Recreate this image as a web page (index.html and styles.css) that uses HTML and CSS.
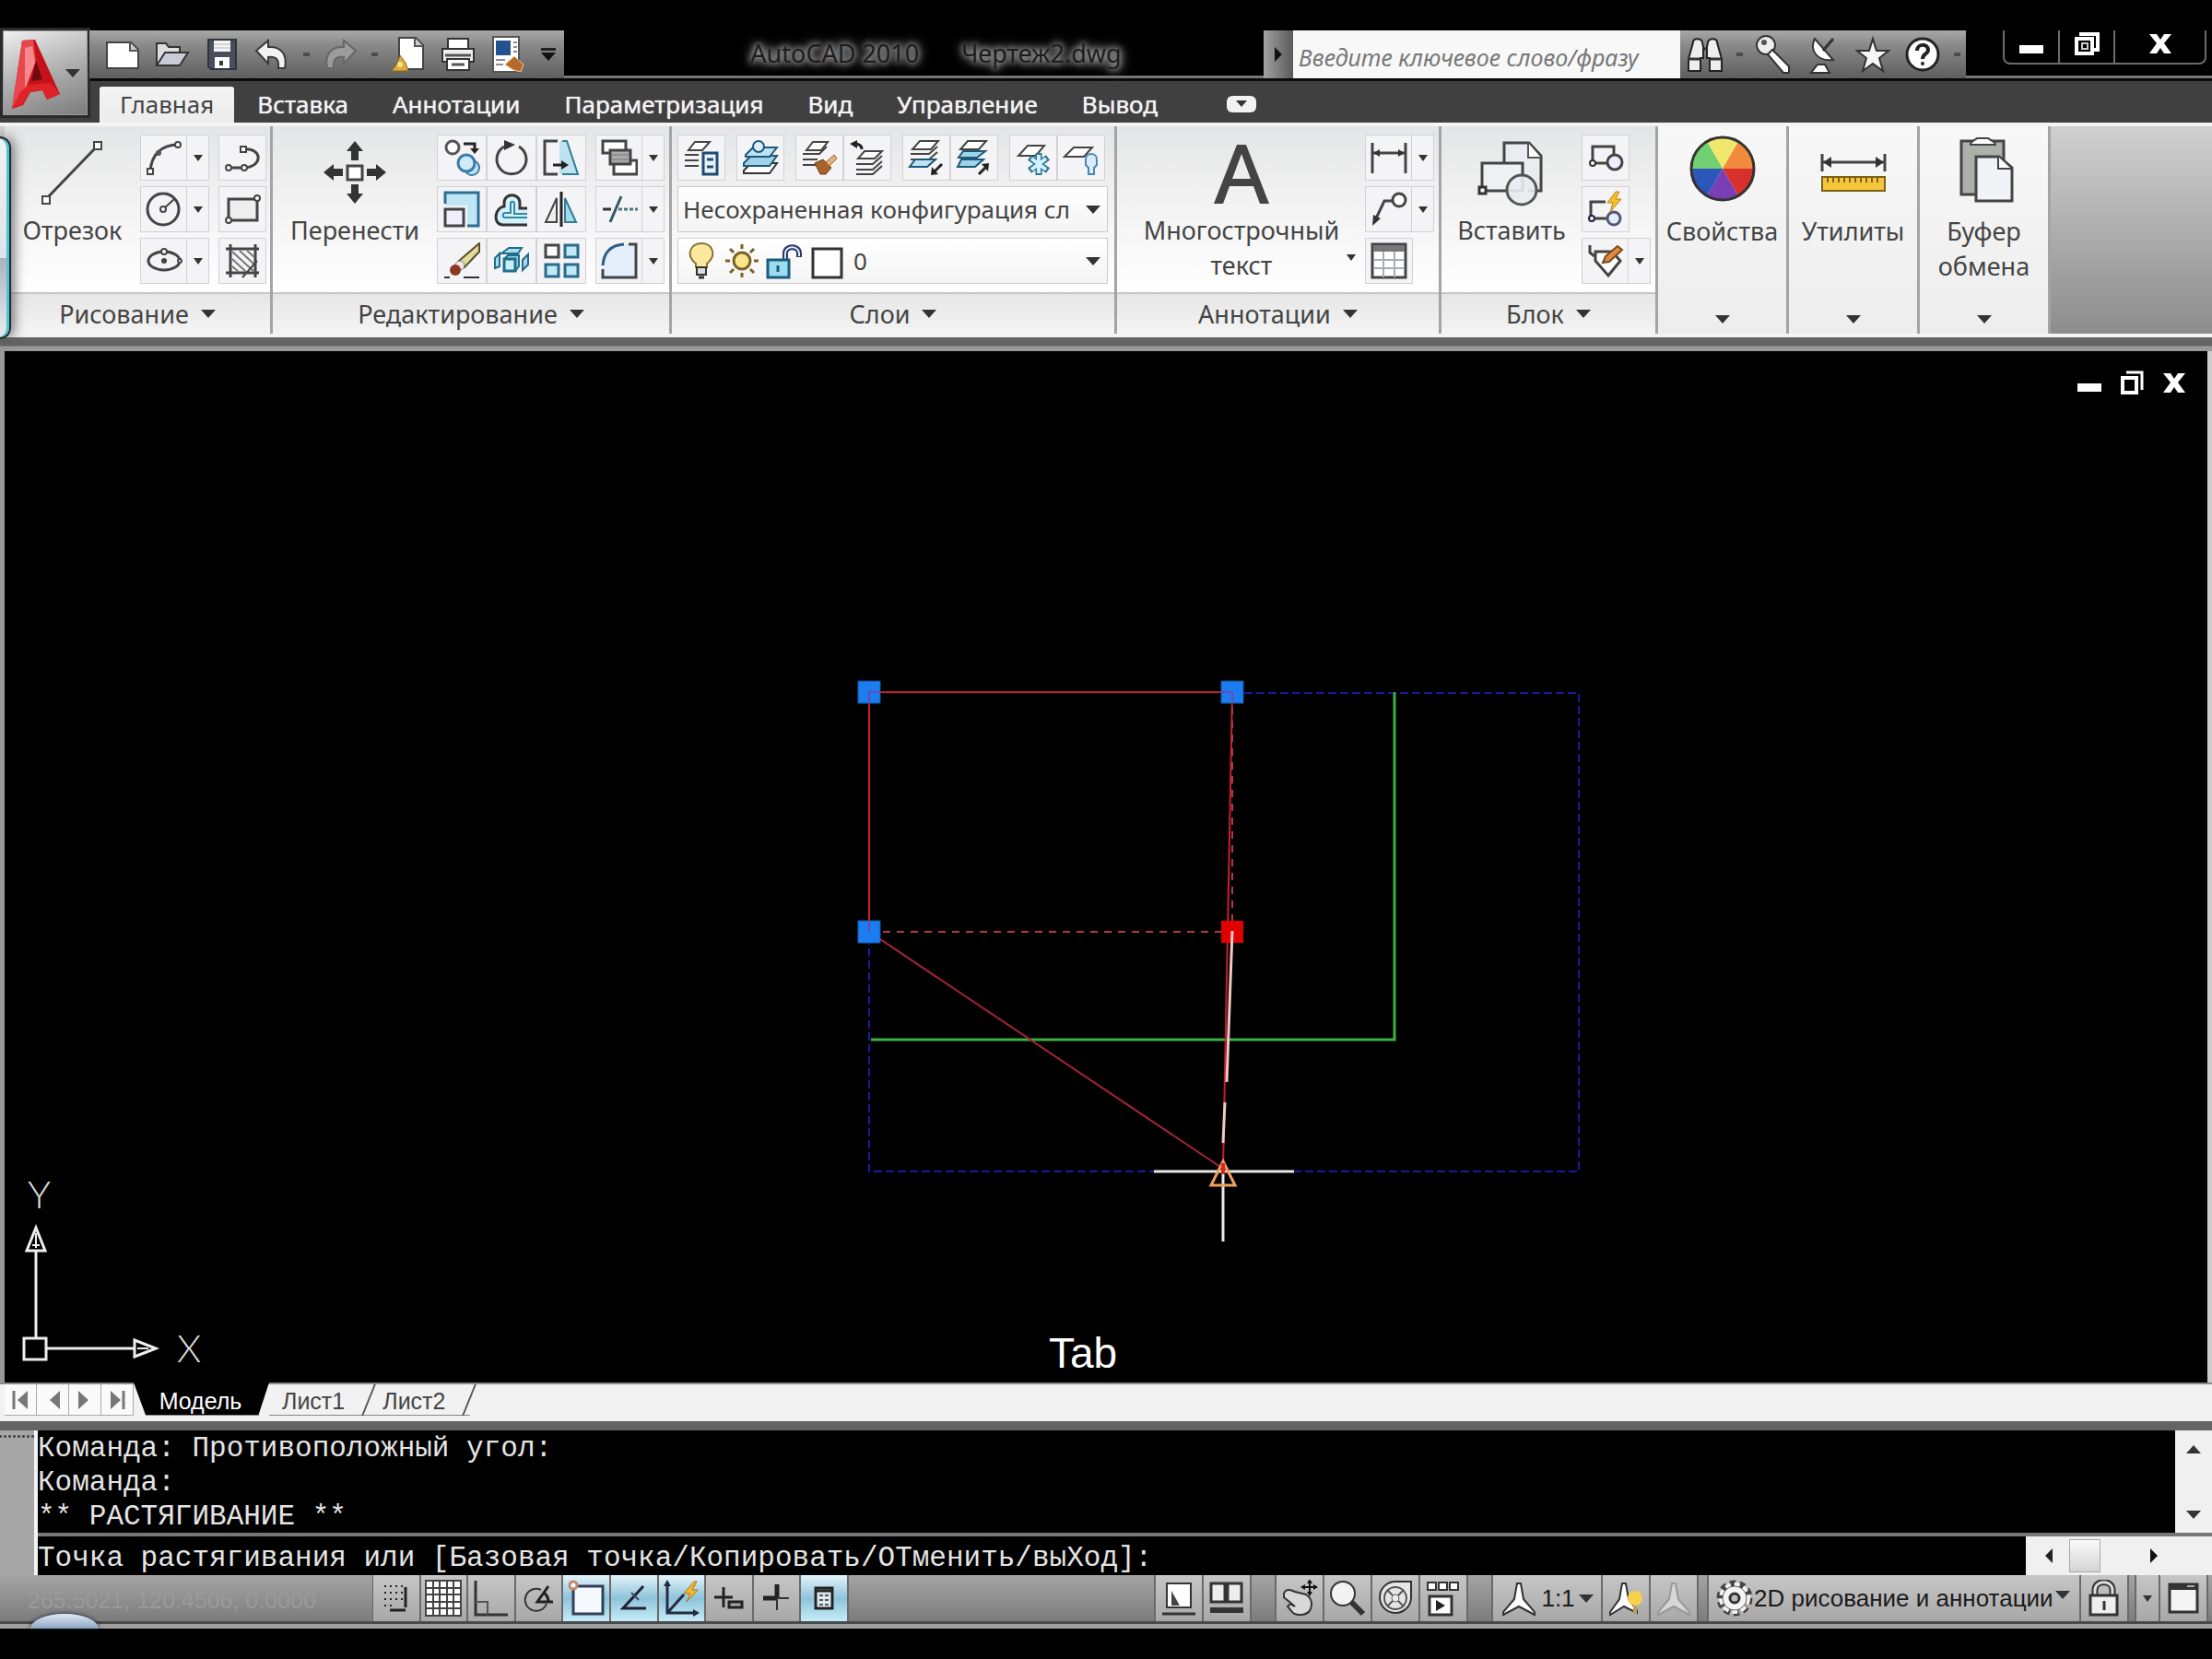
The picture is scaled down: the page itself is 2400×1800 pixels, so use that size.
FILE: index.html
```html
<!DOCTYPE html>
<html lang="ru">

<head>
    <meta charset="UTF-8">
    <meta name="viewport" content="width=device-width, initial-scale=1.0">
    <title>AutoCAD 2010 - Чертеж2.dwg</title>
    <link rel="stylesheet" href="styles.css">
</head>

<body>
    <!-- Заголовок и вкладки -->
    <header class="top">
        <button class="app-btn" aria-label="Меню приложения">
            <svg width="56" height="78" viewBox="0 0 56 78">
                <path d="M13 4 L27 3 L54 62 L40 68 L35 58 L22 60 L14 74 L2 78 Z" fill="#c4121a" />
                <path d="M13 4 L25 3 L28 26 L14 66 L2 78 Z" fill="#e8474e" />
                <path d="M16 12 L24 10 L27 28 L16 56 Z" fill="#f58a8c" />
                <path d="M28 26 L35 46 L23 48 Z" fill="#6e0a10" />
                <path d="M20 52 L44 50 L54 62 L40 68 L35 58 L22 60 L14 74 L2 78 L11 60 Z" fill="#dd2228" />
            </svg>
            <span class="caret"></span>
        </button>

        <div class="titlebar">
            <div class="qat">
                <button aria-label="Создать"><svg width="40" height="34" viewBox="0 0 40 34"><path d="M3 4h26l8 8v20H3z" fill="#fff" stroke="#444" stroke-width="2" /><path d="M28 4v9h9" fill="#ccc" stroke="#555" stroke-width="2" /></svg></button>
                <button aria-label="Открыть"><svg width="40" height="34" viewBox="0 0 40 34"><path d="M3 29V5h10l3 4h12v6" fill="#ddd" stroke="#333" stroke-width="2" /><path d="M3 29l9-14h25l-9 14z" fill="#c9ccd6" stroke="#333" stroke-width="2" /></svg></button>
                <button aria-label="Сохранить"><svg width="36" height="36" viewBox="0 0 36 36"><path d="M3 2h30v32H6l-3-3z" fill="#4a4e5c" stroke="#30333c" stroke-width="2" /><path d="M9 3h18v12H9z" fill="#f4f4f4" /><path d="M9 7h18M9 11h18" stroke="#bbb" /><path d="M10 21h16v12H10z" fill="#fff" /><path d="M15 25h4v5h-4z" fill="#333" /></svg></button>
                <button aria-label="Отменить"><svg width="40" height="36" viewBox="0 0 40 36"><path d="M3 14L16 3v7c14-1 21 8 18 23h-7c1-9-2-13-11-12v7z" fill="#f2f2f2" stroke="#3a3a3a" stroke-width="2" /></svg></button>
                <span class="dot"></span>
                <button aria-label="Повторить"><svg width="40" height="36" viewBox="0 0 40 36"><path d="M37 14L24 3v7C10 9 3 18 6 33h7c-1-9 2-13 11-12v7z" fill="#9b9b9b" stroke="#666" stroke-width="2" /></svg></button>
                <span class="dot"></span>
                <button aria-label="Лист"><svg width="40" height="42" viewBox="0 0 40 42"><path d="M10 3h18l8 8v26H10z" fill="#fff" stroke="#444" stroke-width="2" /><path d="M27 3v9h9" fill="#ccc" stroke="#555" stroke-width="2" /><path d="M11 22l-3 9-6 8h18l-3-9z" fill="#e0ad3b" stroke="#8a6a22" /><circle cx="11" cy="32" r="3" fill="#f8e37c" /></svg></button>
                <button aria-label="Печать"><svg width="40" height="38" viewBox="0 0 40 38"><path d="M9 2h22v12H9z" fill="#fff" stroke="#333" stroke-width="2" /><path d="M3 13h34v14H3z" fill="#eee" stroke="#333" stroke-width="2" /><path d="M8 24h24v12H8z" fill="#fff" stroke="#333" stroke-width="2" /><path d="M6 20h28M13 30h14" stroke="#555" stroke-width="3" /></svg></button>
                <button aria-label="Свойства листа"><svg width="42" height="42" viewBox="0 0 42 42"><path d="M5 2h28v38H5z" fill="#fff" stroke="#555" stroke-width="2" /><path d="M8 6h16v16H8z" fill="#24518f" /><path d="M27 8h4M27 13h4M27 18h4M8 27h10M8 32h8" stroke="#889" stroke-width="2" /><path d="M18 32l10-9 10 9-3 8-8-2z" fill="#b5692b" stroke="#f1c99b" /></svg></button>
                <button class="more" aria-label="Настройка"><span class="bar"></span><span class="caret"></span></button>
            </div>
            <div class="caption">
                <span>AutoCAD 2010</span>
                <span>Чертеж2.dwg</span>
            </div>
            <div class="info">
                <button class="info-toggle" aria-label="Свернуть"><span class="caret-right"></span></button>
                <input type="text" class="search" placeholder="Введите ключевое слово/фразу" aria-label="Поиск">
                <button aria-label="Найти"><svg width="42" height="44" viewBox="0 0 42 44"><path d="M8 9c0-5 9-5 10 0l1 5v12h-3v14H3V27zM34 9c0-5-9-5-10 0l-1 5v12h3v14h13V27z" fill="#eee" stroke="#222" stroke-width="2" /><path d="M3 27h13M26 27h13M19 16h4" stroke="#333" stroke-width="3" /></svg></button>
                <span class="dot"></span>
                <button aria-label="Подписка"><svg width="40" height="44" viewBox="0 0 40 44"><circle cx="12" cy="12" r="10" fill="#eee" stroke="#333" stroke-width="2" /><circle cx="10" cy="9" r="3" fill="#555" /><path d="M14 22l5-5 18 18v7h-6z" fill="#fff" stroke="#333" stroke-width="2" /></svg></button>
                <button aria-label="Связь"><svg width="36" height="44" viewBox="0 0 36 44"><path d="M9 5c-6 12 2 25 20 23z" fill="#fff" stroke="#333" stroke-width="2" /><path d="M18 18L29 5" stroke="#333" stroke-width="3" /><path d="M12 33h8l5 9H5z" fill="#fff" stroke="#333" stroke-width="2" /></svg></button>
                <button aria-label="Избранное"><svg width="40" height="44" viewBox="0 0 40 44"><path d="M20 5l4 13h13l-10 8 4 14-11-8-11 8 4-14-10-8h13z" fill="#f6f6f6" stroke="#333" stroke-width="2" /></svg></button>
                <button aria-label="Справка"><svg width="42" height="44" viewBox="0 0 42 44"><circle cx="21" cy="22" r="17" fill="#fff" stroke="#222" stroke-width="3" /><path d="M15 18c0-8 12-8 12-1 0 5-6 4-6 10" fill="none" stroke="#222" stroke-width="4" /><circle cx="21" cy="32" r="2" fill="#222" /></svg></button>
                <span class="dot"></span>
            </div>
            <div class="win-btns">
                <button aria-label="Свернуть окно"><svg width="30" height="32" viewBox="0 0 30 32"><path d="M2 14h26v9H2z" fill="#fff" /></svg></button>
                <button aria-label="Восстановить окно"><svg width="30" height="32" viewBox="0 0 30 32"><path d="M9 4V2h18v17h-4M4 7h17v16H4z" fill="none" stroke="#fff" stroke-width="4" /><path d="M10 12h6v6h-6z" fill="none" stroke="#ccc" stroke-width="2" /></svg></button>
                <button class="wide" aria-label="Закрыть окно"><svg width="30" height="32" viewBox="0 0 30 32"><path d="M3 2h8l4 6 4-6h8l-8 10 8 11h-8l-4-6-4 6H3l8-11z" fill="#fff" /></svg></button>
            </div>
        </div>

        <nav class="tabs">
            <a href="#" class="active">Главная</a>
            <a href="#">Вставка</a>
            <a href="#">Аннотации</a>
            <a href="#">Параметризация</a>
            <a href="#">Вид</a>
            <a href="#">Управление</a>
            <a href="#">Вывод</a>
            <button class="pill" aria-label="Свернуть ленту"><span class="caret"></span></button>
        </nav>
    </header>

    <!-- Лента -->
    <div class="ribbon">
        <section class="panel draw">
            <div class="panel-body">
                <button class="big"><svg width="72" height="74" viewBox="0 0 72 74"><path d="M7 64L61 8" stroke="#444" stroke-width="3" /><path d="M59 2h8v8h-8zM3 61h8v8H3z" fill="#fff" stroke="#444" stroke-width="2" /></svg>Отрезок</button>
                <div class="stack">
                    <div class="split"><button aria-label="Дуга"><svg class="ic" viewBox="0 0 40 40"><path d="M5 35C6 18 16 6 35 6" fill="none" stroke="#444" stroke-width="3" /><circle cx="35" cy="6" r="3" fill="#fff" stroke="#444" stroke-width="2" /><circle cx="14" cy="15" r="3" fill="#555" /><path d="M2 32h6v6H2z" fill="#fff" stroke="#444" stroke-width="2" /></svg></button><button class="drop" aria-label="Ещё"><span class="caret sm"></span></button></div>
                    <div class="split"><button aria-label="Круг"><svg class="ic" viewBox="0 0 40 40"><circle cx="19" cy="20" r="17" fill="none" stroke="#444" stroke-width="3" /><path d="M19 20L31 9" stroke="#444" stroke-width="2" /><circle cx="19" cy="20" r="3" fill="#fff" stroke="#444" stroke-width="2" /></svg></button><button class="drop" aria-label="Ещё"><span class="caret sm"></span></button></div>
                    <div class="split"><button aria-label="Эллипс"><svg class="ic" viewBox="0 0 40 40"><ellipse cx="20" cy="20" rx="17" ry="10" fill="none" stroke="#444" stroke-width="3" /><circle cx="20" cy="20" r="3" fill="#444" /><circle cx="20" cy="10" r="3" fill="#fff" stroke="#444" stroke-width="2" /><circle cx="37" cy="20" r="2" fill="#fff" stroke="#444" stroke-width="2" /></svg></button><button class="drop" aria-label="Ещё"><span class="caret sm"></span></button></div>
                </div>
                <div class="stack">
                    <button class="tile" aria-label="Полилиния"><svg class="ic" viewBox="0 0 40 40"><path d="M4 31h17M21 11c22-2 21 20 0 20" fill="none" stroke="#444" stroke-width="3" /><circle cx="5" cy="31" r="3" fill="#fff" stroke="#444" stroke-width="2" /><circle cx="22" cy="31" r="3" fill="#fff" stroke="#444" stroke-width="2" /><path d="M18 8h6v6h-6z" fill="#fff" stroke="#444" stroke-width="2" /></svg></button>
                    <button class="tile" aria-label="Прямоугольник"><svg class="ic" viewBox="0 0 40 40"><path d="M5 9h31v23H5z" fill="#eee" stroke="#444" stroke-width="3" /><circle cx="36" cy="8" r="3" fill="#fff" stroke="#444" stroke-width="2" /><circle cx="5" cy="32" r="3" fill="#fff" stroke="#444" stroke-width="2" /></svg></button>
                    <button class="tile" aria-label="Штриховка"><svg class="ic" viewBox="0 0 40 40"><path d="M2 7h36M2 33h36M7 2v36M34 2v36" stroke="#444" stroke-width="3" /><path d="M9 10l24 22M9 18l15 14M9 26l7 6M17 9l16 15M25 9l8 7" stroke="#777" stroke-width="2" /><path d="M20 38l16-18" stroke="#444" stroke-width="2" /></svg></button>
                </div>
            </div>
            <button class="panel-title">Рисование<span class="caret"></span></button>
        </section>

        <section class="panel edit">
            <div class="panel-body">
                <button class="big"><svg width="72" height="74" viewBox="0 0 72 74"><path d="M28 28h16v15H28z" fill="#fff" stroke="#444" stroke-width="3" /><path d="M36 1l9 11h-5v10h-8V12h-5zM36 69l9-11h-5V48h-8v10h-5zM2 35l11-9v5h10v8H13v5zM70 35l-11-9v5H49v8h10v5z" fill="#333" /></svg>Перенести</button>
                <div class="grid3">
                    <button class="tile" aria-label="Копировать"><svg class="ic" viewBox="0 0 40 40"><circle cx="10" cy="9" r="7" fill="#fff" stroke="#555" stroke-width="3" /><path d="M22 5h12v6" fill="none" stroke="#222" stroke-width="3" /><path d="M29 10h10l-5 6z" fill="#222" /><circle cx="31" cy="31" r="8" fill="#bfe3f5" stroke="#3a7ba8" stroke-width="2" /><circle cx="25" cy="26" r="9" fill="#cfeafa" stroke="#3a7ba8" stroke-width="3" /></svg></button>
                    <button class="tile" aria-label="Повернуть"><svg class="ic" viewBox="0 0 40 40"><path d="M28 8a16 16 0 1 1-16 0" fill="none" stroke="#444" stroke-width="3" /><path d="M12 1l12 5-12 6z" fill="#333" /></svg></button>
                    <button class="tile" aria-label="Растянуть"><svg class="ic" viewBox="0 0 40 40"><path d="M18 2h8l12 36H18z" fill="#bfe3ee" /><path d="M16 2H2v36h14" fill="none" stroke="#444" stroke-width="3" /><path d="M21 2h5l12 36H21" fill="none" stroke="#2f7d96" stroke-width="2" /><path d="M11 28h12" stroke="#222" stroke-width="3" /><path d="M20 23l8 5-8 5z" fill="#222" /></svg></button>
                    <button class="tile" aria-label="Масштаб"><svg class="ic" viewBox="0 0 40 40"><path d="M2 14V2h36v36H26V16H2z" fill="#bfe6f5" /><path d="M2 14V2h36v36H26" fill="none" stroke="#2d6f94" stroke-width="3" /><path d="M2 20h20v18H2z" fill="#eef" stroke="#444" stroke-width="3" /></svg></button>
                    <button class="tile" aria-label="Смещение"><svg class="ic" viewBox="0 0 40 40"><path d="M37 19h-8V13c0-11-17-11-17 0v4C2 18-1 36 10 37h27" fill="#d4f1fb" stroke="#333" stroke-width="3" /><path d="M37 29H13c-3 0-3-5 0-5h6V14c0-3 4-3 4 0v11h14" fill="none" stroke="#3388a8" stroke-width="2" /></svg></button>
                    <button class="tile" aria-label="Зеркало"><svg class="ic" viewBox="0 0 40 40"><path d="M15 8v26H3z" fill="#eee" stroke="#444" stroke-width="2" /><path d="M24 8v26h12z" fill="#a5dbe8" stroke="#2f7d96" stroke-width="2" /><path d="M20 1v38" stroke="#222" stroke-width="3" /></svg></button>
                    <button class="tile" aria-label="Стереть"><svg class="ic" viewBox="0 0 40 40"><path d="M1 38h6M22 38h17" stroke="#333" stroke-width="2" /><path d="M39 1L17 20l6 7L39 10z" fill="#e5dc9a" stroke="#55502c" stroke-width="2" /><circle cx="18" cy="25" r="5" fill="#f3e9e4" stroke="#777" /><circle cx="13" cy="30" r="6" fill="#8a3a22" /></svg></button>
                    <button class="tile" aria-label="3D массив"><svg class="ic" viewBox="0 0 40 40"><path d="M12 18l4-4h12v12l-4 5H12z" fill="#8ed0e8" stroke="#226c8c" stroke-width="2" /><path d="M12 18h12v13H12z" fill="#c9eefa" stroke="#226c8c" stroke-width="3" /><path d="M9 12l8-6h14l-4 6z" fill="#a9dcef" stroke="#226c8c" stroke-width="2" /><path d="M2 28V17l5-5v14zM32 30V19l6-6v11z" fill="#a9dcef" stroke="#226c8c" stroke-width="2" /></svg></button>
                    <button class="tile" aria-label="Массив"><svg class="ic" viewBox="0 0 40 40"><path d="M3 3h14v13H3z" fill="#fff" stroke="#444" stroke-width="3" /><path d="M24 3h14v13H24zM3 24h14v13H3zM24 24h14v13H24z" fill="#bfe9f5" stroke="#2b6b8c" stroke-width="3" /></svg></button>
                </div>
                <div class="stack">
                    <div class="split"><button aria-label="Порядок"><svg class="ic" viewBox="0 0 40 40"><path d="M2 2h25v13H2zM14 23h25v15H14z" fill="#fff" stroke="#444" stroke-width="3" /><path d="M10 12h22v15H10z" fill="#aaa" stroke="#444" stroke-width="3" /><path d="M11 17h20M11 22h20" stroke="#777" /></svg></button><button class="drop" aria-label="Ещё"><span class="caret sm"></span></button></div>
                    <div class="split"><button aria-label="Обрезать"><svg class="ic" viewBox="0 0 40 40"><path d="M2 20h9" stroke="#333" stroke-width="3" /><path d="M19 20h21" stroke="#4a7486" stroke-width="3" stroke-dasharray="4 2" /><path d="M22 6L10 34" stroke="#2f5868" stroke-width="3" /></svg></button><button class="drop" aria-label="Ещё"><span class="caret sm"></span></button></div>
                    <div class="split"><button aria-label="Сопряжение"><svg class="ic" viewBox="0 0 40 40"><path d="M2 25C3 12 10 3 24 2h14v36H2z" fill="#e3effa" /><path d="M2 25C3 12 10 3 25 2" fill="none" stroke="#2b5f8a" stroke-width="3" /><path d="M30 2h8v36H2v-9" fill="none" stroke="#444" stroke-width="3" /></svg></button><button class="drop" aria-label="Ещё"><span class="caret sm"></span></button></div>
                </div>
            </div>
            <button class="panel-title">Редактирование<span class="caret"></span></button>
        </section>

        <section class="panel layers">
            <div class="panel-body">
                <div class="stack">
                    <div class="tools">
                        <div><button class="tile" aria-label="Свойства слоя"><svg class="ic" viewBox="0 0 40 40"><path d="M13 3h16l-8 9H6z" fill="#fff" stroke="#444" stroke-width="2" /><path d="M2 17h15M2 23h15M2 29h15" stroke="#444" stroke-width="2" /><path d="M22 15h15v23H22z" fill="#e6f2fa" stroke="#1f4c74" stroke-width="3" /><path d="M26 22h7M26 30h7" stroke="#1f4c74" stroke-width="3" /></svg></button></div>
                        <div><button class="tile" aria-label="Сделать текущим"><svg class="ic" viewBox="0 0 40 40"><path d="M2 34l8-8h28l-8 11H2z" fill="#fff" stroke="#333" stroke-width="2" /><path d="M2 26l8-8h28l-8 11H2z" fill="#9fd3ea" stroke="#1e5878" stroke-width="2" /><path d="M4 17l8-8h26l-8 10H4z" fill="#bfe3f5" stroke="#1e5878" stroke-width="2" /><circle cx="18" cy="8" r="6" fill="#d9f0fb" stroke="#1e5878" stroke-width="2" /></svg></button></div>
                        <div><button class="tile" aria-label="Копирование свойств слоя"><svg class="ic" viewBox="0 0 40 40"><path d="M13 3h16l-7 9H6z" fill="#fff" stroke="#444" stroke-width="2" /><path d="M2 16h18l8-8M2 22h16M2 28h14" fill="none" stroke="#444" stroke-width="2" /><path d="M15 26l9-4 9 9-6 7h-6z" fill="#a8622e" stroke="#6e3c17" /><path d="M27 25l9-8 3 4-8 8z" fill="#e0b080" stroke="#a8622e" /></svg></button><button class="tile" aria-label="Предыдущий"><svg class="ic" viewBox="0 0 40 40"><path d="M17 13h19l-8 8H10z" fill="#fff" stroke="#444" stroke-width="2" /><path d="M8 27h18l10-9M8 33h18l10-9M8 38h18l10-9" fill="none" stroke="#444" stroke-width="2" /><path d="M14 11c0-4-3-6-8-6" fill="none" stroke="#222" stroke-width="3" /><path d="M1 5l8-4v9z" fill="#222" /></svg></button></div>
                        <div><button class="tile" aria-label="Изолировать"><svg class="ic" viewBox="0 0 40 40"><path d="M13 2h20l-8 9H5z" fill="#fff" stroke="#444" stroke-width="2" /><path d="M3 16h20l9-8M3 22h20l9-8" fill="none" stroke="#444" stroke-width="2" /><path d="M8 22h22l-9 8H2z" fill="#bfe3f5" stroke="#1e5878" stroke-width="2" /><path d="M37 27L29 35" stroke="#222" stroke-width="3" /><path d="M25 39l1-9 7 8z" fill="#222" /></svg></button><button class="tile" aria-label="Вернуть"><svg class="ic" viewBox="0 0 40 40"><path d="M13 2h20l-8 9H5z" fill="#fff" stroke="#444" stroke-width="2" /><path d="M8 13h24l-9 7H3zM6 22h24l-9 8H2z" fill="#9fd3ea" stroke="#1e5878" stroke-width="2" /><path d="M25 38l7-7" stroke="#222" stroke-width="3" /><path d="M36 26l-1 9-7-8z" fill="#222" /></svg></button></div>
                        <div><button class="tile" aria-label="Заморозить"><svg class="ic" viewBox="0 0 40 40"><path d="M14 7h18l-9 11H4z" fill="#fff" stroke="#444" stroke-width="2" /><path d="M26 15v24M16 20l20 14M36 20L16 34" stroke="#2d7496" stroke-width="7" /><path d="M26 17v20M18 21l16 12M34 21L18 33" stroke="#d3f1fb" stroke-width="4" /></svg></button><button class="tile" aria-label="Отключить"><svg class="ic" viewBox="0 0 40 40"><path d="M12 9h20l-9 10H2z" fill="#fff" stroke="#444" stroke-width="2" /><path d="M25 22c0-8 12-8 12 0v6l-3 3v7h-6v-7l-3-3z" fill="#d8ecfa" stroke="#4a87b0" stroke-width="2" /></svg></button></div>
                    </div>
                    <div class="combo">
                        <select aria-label="Конфигурация слоев">
                            <option>Несохраненная конфигурация сл</option>
                        </select>
                        <span class="caret"></span>
                    </div>
                    <div class="combo">
                        <svg width="40" height="44" viewBox="0 0 40 44"><path d="M14 25c-12-10-5-22 6-22s18 12 6 22v4H14z" fill="#fbe9a0" stroke="#8a7434" stroke-width="2" /><path d="M15 29h10v8H15z" fill="#ddd" stroke="#333" stroke-width="2" /><path d="M17 40h6" stroke="#333" stroke-width="3" /></svg>
                        <svg width="40" height="44" viewBox="0 0 40 44"><circle cx="20" cy="22" r="9" fill="#fbe48c" stroke="#7a6224" stroke-width="3" /><path d="M20 4v5M20 35v5M2 22h5M33 22h5M7 9l4 4M29 31l4 4M33 9l-4 4M11 31l-4 4" stroke="#7a6224" stroke-width="3" /></svg>
                        <svg width="44" height="44" viewBox="0 0 44 44"><path d="M23 22v-8c0-9 15-9 15 0v4" fill="none" stroke="#336" stroke-width="6" /><path d="M23 22v-8c0-9 15-9 15 0v3" fill="none" stroke="#cfeefa" stroke-width="2" /><path d="M4 21h23v19H4z" fill="#9bdcf0" stroke="#1b5c7c" stroke-width="3" /><path d="M15 27v7" stroke="#1b5c7c" stroke-width="3" /></svg>
                        <svg width="42" height="44" viewBox="0 0 42 44"><path d="M5 9h31v31H5z" fill="#fff" stroke="#333" stroke-width="3" /></svg>
                        <select aria-label="Слой">
                            <option>0</option>
                        </select>
                        <span class="caret"></span>
                    </div>
                </div>
            </div>
            <button class="panel-title">Слои<span class="caret"></span></button>
        </section>

        <section class="panel notes">
            <div class="panel-body">
                <button class="big"><svg width="72" height="74" viewBox="0 0 72 74"><path d="M6 69L31 5h10l25 64H56l-7-19H23l-7 19zM26 42h20L36 15z" fill="#444" fill-rule="evenodd" /></svg>Многострочный<br>текст</button>
                <button class="big-drop" aria-label="Ещё"><span class="caret sm"></span></button>
                <div class="stack">
                    <div class="split"><button aria-label="Размер"><svg class="ic" viewBox="0 0 40 40"><path d="M2 4v33M38 4v33M3 15h34" stroke="#444" stroke-width="3" /><path d="M3 15l7-4v8zM37 15l-7-4v8z" fill="#333" /></svg></button><button class="drop" aria-label="Ещё"><span class="caret sm"></span></button></div>
                    <div class="split"><button aria-label="Выноска"><svg class="ic" viewBox="0 0 40 40"><path d="M5 32L15 11h9" fill="none" stroke="#444" stroke-width="3" /><circle cx="31" cy="10" r="7" fill="#fff" stroke="#444" stroke-width="3" /><path d="M2 38l1-12 8 4z" fill="#333" /></svg></button><button class="drop" aria-label="Ещё"><span class="caret sm"></span></button></div>
                    <button class="tile" aria-label="Таблица"><svg class="ic" viewBox="0 0 40 40"><path d="M2 2h36v36H2z" fill="#fff" stroke="#444" stroke-width="3" /><path d="M3 3h34v7H3z" fill="#777" /><path d="M3 19h34M3 28h34M14 10v28M26 10v28" stroke="#aab" stroke-width="2" /></svg></button>
                </div>
            </div>
            <button class="panel-title">Аннотации<span class="caret"></span></button>
        </section>

        <section class="panel block">
            <div class="panel-body">
                <button class="big"><svg width="76" height="74" viewBox="0 0 76 74"><path d="M30 24V3h27l13 14v38H56" fill="#e9ecf0" stroke="#444" stroke-width="3" /><path d="M56 3v16h14" fill="#fff" stroke="#555" stroke-width="2" /><path d="M6 50V25h44v30H8" fill="#eef0f2" stroke="#444" stroke-width="3" /><circle cx="49" cy="54" r="16" fill="#e9ebee" fill-opacity=".9" stroke="#555" stroke-width="3" /><path d="M3 51h7v7H3z" fill="#fff" stroke="#333" stroke-width="3" /></svg>Вставить</button>
                <div class="stack">
                    <button class="tile" aria-label="Создать блок"><svg class="ic" viewBox="0 0 40 40"><path d="M6 24V8h23v8M6 26h18" fill="none" stroke="#444" stroke-width="3" /><circle cx="30" cy="25" r="8" fill="#eef" stroke="#444" stroke-width="3" /><circle cx="6" cy="26" r="3" fill="#fff" stroke="#333" stroke-width="2" /></svg></button>
                    <button class="tile" aria-label="Редактор блоков"><svg class="ic" viewBox="0 0 40 40"><path d="M20 12H4v18h18" fill="none" stroke="#444" stroke-width="3" /><circle cx="29" cy="30" r="7" fill="#dfeefa" stroke="#557" stroke-width="3" /><circle cx="5" cy="30" r="3" fill="#fff" stroke="#224" stroke-width="2" /><path d="M31 1l-9 12h6l-3 10 12-14h-6l4-8z" fill="#f6bf2c" stroke="#b98312" /></svg></button>
                    <div class="split"><button aria-label="Атрибуты"><svg class="ic" viewBox="0 0 40 40"><path d="M3 3v8l5 4" fill="none" stroke="#444" stroke-width="3" /><path d="M9 10h18l9 10-13 16L9 20z" fill="#fff" stroke="#444" stroke-width="3" /><path d="M17 22l3-7L33 4l5 4-14 13z" fill="#e08a3c" stroke="#7a4a22" stroke-width="2" /></svg></button><button class="drop" aria-label="Ещё"><span class="caret sm"></span></button></div>
                </div>
            </div>
            <button class="panel-title">Блок<span class="caret"></span></button>
        </section>

        <button class="panel flat">
            <svg width="74" height="74" viewBox="-37 -37 74 74"><path d="M0 0L-17.500-30.300A35 35 0 0 1 17.500-30.300z" fill="#f0e76c" /><path d="M0 0L17.500-30.300A35 35 0 0 1 35 0z" fill="#f08a3c" /><path d="M0 0L35 0A35 35 0 0 1 17.500 30.300z" fill="#d8302c" /><path d="M0 0L17.500 30.300A35 35 0 0 1-17.500 30.300z" fill="#7a3fb5" /><path d="M0 0L-17.500 30.300A35 35 0 0 1-35 0z" fill="#2c56b8" /><path d="M0 0L-35 0A35 35 0 0 1-17.500-30.300z" fill="#72cf72" /><circle r="34" fill="none" stroke="#333" stroke-width="3" /></svg>
            <span class="flat-label">Свойства</span>
            <span class="caret"></span>
        </button>
        <button class="panel flat">
            <svg width="74" height="74" viewBox="0 0 74 74"><path d="M3 21v19M71 21v19M4 30h66" stroke="#444" stroke-width="3" /><path d="M4 30l9-6v12zM70 30l-9-6v12z" fill="#333" /><path d="M3 46h68v15H3z" fill="#f5c53a" stroke="#7d6118" stroke-width="2" /><path d="M9 46v6M15 46v6M21 46v6M27 46v6M33 46v6M39 46v6M45 46v6M51 46v6M57 46v6M63 46v6" stroke="#7d6118" stroke-width="2" /></svg>
            <span class="flat-label">Утилиты</span>
            <span class="caret"></span>
        </button>
        <button class="panel flat">
            <svg width="74" height="74" viewBox="0 0 74 74"><path d="M12 7h46v58H12z" fill="#aeb0aa" stroke="#444" stroke-width="3" /><path d="M22 11c0-4 4-4 7-7h12c3 3 8 3 8 7z" fill="#fff" stroke="#444" stroke-width="2" /><path d="M28 24h25l14 12v36H28z" fill="#f2f3f7" stroke="#444" stroke-width="3" /><path d="M52 24v13h14" fill="#fff" stroke="#444" stroke-width="2" /></svg>
            <span class="flat-label">Буфер<br>обмена</span>
            <span class="caret"></span>
        </button>
    </div>

    <!-- Чертеж -->
    <main class="canvas">
        <svg class="drawing" aria-label="Чертеж">
            <g transform="translate(-5 -381)" fill="none">
                <path d="M1337 752H1713V1271H943V1011" stroke="#1a1a9c" stroke-width="2" stroke-dasharray="9 4" />
                <path d="M945 1128H1513V751" stroke="#3cb043" stroke-width="3" />
                <path d="M943 1011V751H1337L1327 1268" stroke="#c8202c" stroke-width="2" />
                <path d="M943 1011L1327 1268" stroke="#a82438" stroke-width="2" />
                <path d="M943 1011H1337V751" stroke="#b03a44" stroke-width="2" stroke-dasharray="8 7" />
                <path d="M931 739h24v24h-24zM1325 739h24v24h-24zM931 999h24v24h-24z" fill="#1b7df0" stroke="#1558a8" />
                <path d="M943 763v-12h12M1325 751h12v12M943 999v12" stroke="#6a4ab0" stroke-width="2" />
                <path d="M1325 999h24v24h-24z" fill="#e00000" />
                <path d="M1337 1010L1331 1174M1329 1196L1327 1240" stroke="#f0c8c8" stroke-width="3" />
                <path d="M1252 1271h152M1327 1271v76" stroke="#e8e8e8" stroke-width="3" />
                <path d="M1327 1260l13 26h-26z" stroke="#f0a060" stroke-width="3" />
                <path d="M1327 1262v12" stroke="#e02020" stroke-width="4" />
            </g>
            <text x="1133" y="1103" class="key">Tab</text>
        </svg>

        <div class="mdi">
            <button aria-label="Свернуть"><svg width="28" height="28" viewBox="0 0 28 28"><path d="M1 15h26v9H1z" fill="#fff" /></svg></button>
            <button aria-label="Восстановить"><svg width="28" height="28" viewBox="0 0 28 28"><path d="M8 3h17v19" fill="none" stroke="#fff" stroke-width="3" /><path d="M4 9h15v16H4z" fill="none" stroke="#fff" stroke-width="4" /></svg></button>
            <button aria-label="Закрыть"><svg width="28" height="28" viewBox="0 0 28 28"><path d="M2 4h8l4 6 4-6h8l-8 10 8 11h-8l-4-6-4 6H2l8-11z" fill="#fff" /></svg></button>
        </div>

        <svg class="ucs" width="220" height="230" viewBox="0 -20 220 230">
            <g fill="none" stroke="#eee" stroke-width="3">
                <path d="M21 162h24v23H21zM34 162V68M45 173h95" />
                <path d="M34 42l10 25H24zM164 173l-23 9v-18z" />
                <path d="M34 48v16M30 61h8M144 173h12" stroke-width="2" />
            </g>
            <text x="25" y="21">Y</text>
            <text x="187" y="188">X</text>
        </svg>
    </main>

    <!-- Листы -->
    <div class="sheets">
        <div class="sheet-nav">
            <button aria-label="Первый"><svg width="24" height="24" viewBox="0 0 24 24"><path d="M5 2v20" stroke="#777" stroke-width="3" /><path d="M20 2v20L9 12z" fill="#777" /></svg></button>
            <button aria-label="Назад"><svg width="24" height="24" viewBox="0 0 24 24"><path d="M20 2v20L9 12z" fill="#777" /></svg></button>
            <button aria-label="Вперёд"><svg width="24" height="24" viewBox="0 0 24 24"><path d="M5 2v20l11-10z" fill="#777" /></svg></button>
            <button aria-label="Последний"><svg width="24" height="24" viewBox="0 0 24 24"><path d="M19 2v20" stroke="#777" stroke-width="3" /><path d="M5 2v20l11-10z" fill="#777" /></svg></button>
        </div>
        <button class="sheet current">Модель</button>
        <button class="sheet">Лист1</button>
        <button class="sheet">Лист2</button>
    </div>

    <!-- Командная строка -->
    <div class="command">
        <div class="grip"></div>
        <div class="console">
            <div class="history">
                <div class="lines">
                    <p>Команда: Противоположный угол:</p>
                    <p>Команда:</p>
                    <p>** РАСТЯГИВАНИЕ **</p>
                </div>
                <div class="vscroll">
                    <button aria-label="Вверх"><span class="caret-up"></span></button>
                    <button aria-label="Вниз"><span class="caret"></span></button>
                </div>
            </div>
            <div class="prompt">
                <input type="text" aria-label="Команда" value="Точка растягивания или [Базовая точка/Копировать/ОТменить/выХод]:">
                <div class="hscroll">
                    <button aria-label="Влево"><span class="caret-left"></span></button>
                    <span class="thumb"></span>
                    <button aria-label="Вправо"><span class="caret-right"></span></button>
                </div>
            </div>
        </div>
    </div>

    <!-- Строка состояния -->
    <footer class="status">
        <span class="coords">265.5021, 120.4506, 0.0000</span>
        <div class="modes">
            <button aria-label="Шаг"><svg class="ic" viewBox="0 0 40 40"><path d="M7 7h22M7 14h22M7 21h22M7 28h12" stroke="#222" stroke-width="2" stroke-dasharray="2 4" /><path d="M30 8v22M13 33h17" stroke="#222" stroke-width="3" /></svg></button>
            <button aria-label="Сетка"><svg class="ic" viewBox="0 0 40 40"><path d="M1 1h38v38H1z" fill="#fff" stroke="#444" stroke-width="2" /><path d="M9 1v38M16 1v38M24 1v38M31 1v38M1 9h38M1 16h38M1 24h38M1 31h38" stroke="#444" stroke-width="2" /></svg></button>
            <button aria-label="Орто"><svg class="ic" viewBox="0 0 40 40"><path d="M3 1v37h35" fill="none" stroke="#333" stroke-width="3" /><path d="M3 24h13v14" fill="none" stroke="#555" stroke-width="2" /></svg></button>
            <button aria-label="Полярное отслеживание"><svg class="ic" viewBox="0 0 40 40"><path d="M22 11a12 12 0 1 0 6 15" fill="none" stroke="#333" stroke-width="2" /><path d="M30 7L18 24h17M25 14c4 3 5 6 5 10" fill="none" stroke="#222" stroke-width="3" /></svg></button>
            <button class="on" aria-label="Привязка"><svg class="ic" viewBox="0 0 40 40"><path d="M6 7h32v30H6z" fill="#f4fafd" stroke="#333f58" stroke-width="3" /><circle cx="6" cy="6" r="4" fill="#fff" stroke="#c08a70" stroke-width="3" /></svg></button>
            <button class="on" aria-label="Объектное отслеживание"><svg class="ic" viewBox="0 0 40 40"><path d="M30 7L8 31h25" fill="none" stroke="#223" stroke-width="3" /><path d="M17 14l8 8" stroke="#446" stroke-width="2" /></svg></button>
            <button class="on" aria-label="Динамическая ПСК"><svg class="ic" viewBox="0 0 40 40"><path d="M5 4v32h32M5 36l18-20" fill="none" stroke="#222b40" stroke-width="3" /><path d="M5 0l4 7H1zM40 36l-7-4v8z" fill="#222b40" /><path d="M34 2l-11 13h7l-4 9 12-13h-6l5-9z" fill="#f6b92c" stroke="#a87412" /></svg></button>
            <button aria-label="Динамический ввод"><svg class="ic" viewBox="0 0 40 40"><path d="M4 19h20M14 8v22" stroke="#222" stroke-width="3" /><path d="M20 24h14v6H20z" fill="#aaa" stroke="#222" stroke-width="3" /></svg></button>
            <button aria-label="Вес линий"><svg class="ic" viewBox="0 0 40 40"><path d="M5 20h15M20 5v15" stroke="#222" stroke-width="5" /><path d="M20 20h13M20 20v13" stroke="#333" stroke-width="2" /></svg></button>
            <button class="on" aria-label="Быстрые свойства"><svg class="ic" viewBox="0 0 40 40"><path d="M11 9h18v22H11z" fill="#dfeaf0" stroke="#222" stroke-width="3" /><path d="M12 12h16" stroke="#222" stroke-width="3" /><path d="M15 17h4M21 17h4M15 22h4M21 22h4M15 27h4M21 27h4" stroke="#555" stroke-width="2" /></svg></button>
        </div>
        <div class="status-right">
            <div class="group">
                <button aria-label="Модель"><svg class="ic" viewBox="0 0 40 40"><path d="M7 4h26v26H7z" fill="#fff" stroke="#333" stroke-width="2" /><path d="M12 12v16h9z" fill="#444" /><path d="M2 37h36" stroke="#333" stroke-width="3" /></svg></button>
                <button aria-label="Листы"><svg class="ic" viewBox="0 0 40 40"><path d="M3 4h15v20H3zM21 4h15v20H21z" fill="#eee" stroke="#333" stroke-width="3" /><path d="M2 33h36" stroke="#333" stroke-width="6" /></svg></button>
            </div>
            <div class="group">
                <button aria-label="Панорамирование"><svg class="ic" viewBox="0 0 40 40"><path d="M3 15c2-6 8-4 12-2l12 3c9 6 8 20-4 22-11 1-11-4-16-9 2-4 5-2 8 0L3 19z" fill="#d8d8d8" stroke="#333" stroke-width="2" /><path d="M31 1v15M23 8h16" stroke="#111" stroke-width="2" /><path d="M31-1l3 5h-6zM31 18l3-5h-6zM21 8l5-3v6zM40 8l-5-3v6z" fill="#111" /></svg></button>
                <button aria-label="Зумирование"><svg class="ic" viewBox="0 0 40 40"><path d="M24 24l13 13" stroke="#333" stroke-width="6" /><circle cx="15" cy="15" r="13" fill="#f2f2f2" stroke="#333" stroke-width="2" /></svg></button>
                <button aria-label="Штурвал"><svg class="ic" viewBox="0 0 40 40"><path d="M20 2h17v18a17 17 0 1 1-17-18z" fill="#e6e6e6" stroke="#333" stroke-width="2" /><circle cx="20" cy="20" r="12" fill="none" stroke="#555" stroke-width="2" /><path d="M11 11l18 18M29 11L11 29" stroke="#555" stroke-width="2" /><circle cx="20" cy="20" r="4" fill="#eee" stroke="#666" /></svg></button>
                <button aria-label="Аниматор"><svg class="ic" viewBox="0 0 40 40"><path d="M3 3h9v8H3zM15 3h9v8h-9zM27 3h9v8h-9z" fill="#fff" stroke="#333" stroke-width="2" /><path d="M5 18h24v20H5z" fill="#fff" stroke="#333" stroke-width="3" /><path d="M12 22v12l10-6z" fill="#222" /></svg></button>
            </div>
            <div class="group">
                <button class="scale"><svg class="ic" viewBox="0 0 40 40"><path d="M18 4h4l3 17 12 14v3l-17-9-17 9v-3l12-14z" fill="#fff" stroke="#333" stroke-width="2" /></svg>1:1<span class="caret"></span></button>
                <button aria-label="Видимость"><svg class="ic" viewBox="0 0 40 40"><path d="M16 4h4l3 17 9 12v3l-14-7-15 9v-3l10-14z" fill="#fff" stroke="#333" stroke-width="2" /><circle cx="30" cy="20" r="8" fill="#f7d04c" /><path d="M28 28h4v9h-4z" fill="#bfa05a" /></svg></button>
                <button aria-label="Автомасштаб"><svg class="ic" viewBox="0 0 40 40"><path d="M18 4h4l3 17 12 14v3l-17-9-17 9v-3l12-14z" fill="#d6d6d6" stroke="#999" stroke-width="2" /></svg></button>
            </div>
            <div class="group">
                <label class="workspace">
                    <svg width="42" height="42" viewBox="-21 -21 42 42"><circle r="16" fill="none" stroke="#444" stroke-width="7" stroke-dasharray="6 4" /><circle r="15" fill="none" stroke="#f4f4f4" stroke-width="4" stroke-dasharray="6 4" /><circle r="13" fill="#f4f4f4" stroke="#666" /><circle r="5" fill="#bbb" stroke="#333" stroke-width="3" /></svg>
                    <select>
                        <option>2D рисование и аннотации</option>
                    </select>
                    <span class="caret"></span>
                </label>
                <button aria-label="Блокировка"><svg class="ic" viewBox="0 0 40 40"><path d="M10 18v-7c0-11 19-11 19 0v7" fill="none" stroke="#333" stroke-width="7" /><path d="M10 18v-7c0-11 19-11 19 0v7" fill="none" stroke="#ddd" stroke-width="3" /><path d="M5 17h29v21H5z" fill="#eee" stroke="#333" stroke-width="3" /><path d="M20 23v10" stroke="#333" stroke-width="3" /></svg></button>
            </div>
            <div class="group">
                <button class="narrow" aria-label="Меню строки состояния"><span class="caret sm"></span></button>
                <button aria-label="Очистить экран"><svg class="ic" viewBox="0 0 40 40"><path d="M5 5h30v30H5z" fill="#f4f4f4" stroke="#333" stroke-width="3" /><path d="M4 4h32v7H4z" fill="#333" /><path d="M24 7h8" stroke="#aaa" stroke-width="2" /></svg></button>
            </div>
        </div>
        <span class="orb"></span>
    </footer>

    <div class="side-handle"></div>
</body>

</html>
```
FILE: styles.css
```css
* {
    margin: 0;
    padding: 0;
    box-sizing: border-box;
}

:root {
    --ui: 'Noto Sans', 'Open Sans', sans-serif;
    --arial: 'Liberation Sans', Arial, sans-serif;
    --mono: 'Liberation Mono', 'Courier New', monospace;
    --ink: #444;
    --bar: #404040;
    --line: #a4a4a4;
}

body {
    background: #000;
    color: var(--ink);
    font-family: var(--ui);
    font-size: 26px;
    display: flex;
    flex-direction: column;
    height: 100vh;
    padding: 33px 0;
    overflow: hidden;
    position: relative;
}

button,
input,
select {
    font: inherit;
    color: inherit;
    border: none;
    background: none;
}

button {
    display: flex;
    align-items: center;
    justify-content: center;
}

svg {
    display: block;
    flex: none;
}

select {
    appearance: none;
    outline: none;
}

.ic {
    width: 40px;
    height: 40px;
}

/* Стрелки */
.caret,
.caret-up,
.caret-left,
.caret-right {
    display: block;
    flex: none;
    border: 8px solid transparent;
}

.caret {
    border-top: 9px solid #333;
    border-bottom: none;
}

.caret.sm {
    border-width: 7px 5px 0;
}

.caret-up {
    border-bottom: 9px solid #333;
    border-top: none;
}

.caret-left {
    border-right: 8px solid #222;
    border-left: none;
}

.caret-right {
    border-left: 8px solid #111;
    border-right: none;
}

.dot {
    width: 20px;
    display: flex;
    justify-content: center;
}

.dot::after {
    content: '';
    width: 7px;
    height: 4px;
    background: #4c4c4c;
}

/* Заголовок */
.top {
    display: grid;
    grid-template-columns: 97px 1fr;
    grid-template-rows: 55px 45px;
    background: linear-gradient(#000 49px, #777 49px, #777 52px, #000 52px, #111 55px, var(--bar) 55px);
    flex: none;
}

.app-btn {
    grid-row: 1 / 3;
    align-self: start;
    margin-left: 3px;
    width: 92px;
    height: 92px;
    gap: 4px;
    background: linear-gradient(160deg, #efefef, #b0b0b0 50%, #7c7c7c);
    border: 1px solid #999;
    box-shadow: 0 0 0 3px #2a2a2a;
}

.titlebar {
    display: flex;
    height: 52px;
}

.qat,
.info {
    display: flex;
    align-items: center;
    background: linear-gradient(#a8a8a8, #8a8a8a 30%, #5e5e5e);
}

.qat {
    padding-left: 9px;
}

.qat button,
.info button {
    width: 54px;
    height: 50px;
}

.qat .more {
    width: 34px;
    flex-direction: column;
    gap: 2px;
}

.bar {
    width: 16px;
    height: 3px;
    background: #222;
}

.more .caret {
    border-top-color: #111;
}

.caption {
    flex: 1;
    display: flex;
    align-items: center;
    justify-content: center;
    gap: 46px;
    padding: 0 0 3px 48px;
    font-size: 27px;
    color: #1c1c1c;
}

.caption span {
    text-shadow: 0 0 6px #aaa, 0 0 9px #999, 0 0 14px #888, 0 0 18px #666;
}

.info .info-toggle {
    width: 32px;
    height: 52px;
    background: linear-gradient(90deg, #a0a0a0, #5a5a5a);
}

.search {
    width: 420px;
    height: 52px;
    padding: 5px 6px 0;
    background: #f8f8f8;
    font-style: italic;
    font-size: 25px;
}

.search::placeholder {
    color: #777;
    opacity: 1;
}

.win-btns {
    display: flex;
    height: 37px;
    margin: 0 6px 0 40px;
    border: 2px solid #6c6c6c;
    border-top: none;
    border-radius: 0 0 8px 8px;
}

.win-btns button {
    width: 60px;
    border-right: 2px solid #6c6c6c;
}

.win-btns .wide {
    width: 97px;
    border: none;
}

/* Вкладки ленты */
.tabs {
    display: flex;
    align-items: center;
    gap: 2px;
    height: 45px;
    padding-left: 11px;
    color: #f2f2f2;
}

.tabs a {
    height: 39px;
    margin-top: 6px;
    padding: 0 23px;
    line-height: 39px;
    color: inherit;
    text-decoration: none;
    text-shadow: 0 0 1px #fff;
}

.tabs .active {
    padding: 0 22px;
    background: linear-gradient(#f4f4f4, #ececec);
    color: var(--ink);
    border-radius: 3px 3px 0 0;
    text-shadow: none;
}

.pill {
    width: 32px;
    height: 18px;
    margin: 4px 0 0 50px;
    background: #f2f2f2;
    border-radius: 6px;
}

.pill .caret {
    border-width: 7px 6px 0;
}

/* Лента */
.ribbon {
    display: flex;
    height: 248px;
    padding-left: 5px;
    padding-right: 4px;
    border-top: 4px solid #f4f4f4;
    background: linear-gradient(#d0d0d0, #8c8c8c 225px, #f4f4f4 225px, #f4f4f4 229px, #646464 229px, #646464 238px, #9a9a9a 239px);
    flex: none;
}

.panel {
    flex: none;
    display: flex;
    flex-direction: column;
    height: 225px;
    border-right: 3px solid var(--line);
    background: #f1f1f1;
    font-size: 27px;
}

.draw { width: 291px; }
.edit { width: 433px; }
.layers { width: 483px; }
.notes { width: 352px; }
.block { width: 235px; }

.panel-body {
    display: flex;
    height: 180px;
    padding-top: 9px;
    background: linear-gradient(#e4e5e6, #f2f2f2 45%, #fff);
}

.panel-title {
    height: 45px;
    gap: 13px;
    border-top: 2px solid #c6c6c6;
    background: linear-gradient(#e6e6e6, #f4f4f4);
}

.big {
    flex-direction: column;
    justify-content: flex-start;
    padding-top: 6px;
    line-height: 38px;
    gap: 5px;
}

.draw .big { width: 147px; }
.edit .big { width: 178px; }
.notes .big { width: 218px; margin-left: 26px; }
.block .big { width: 152px; }

.big-drop {
    width: 25px;
    align-items: flex-start;
    padding: 130px 5px 0 0;
}

.stack {
    display: flex;
    flex-direction: column;
    gap: 6px;
}

.draw .stack + .stack,
.edit .stack {
    margin-left: 10px;
}

.layers .stack {
    margin-left: 6px;
}

.grid3 {
    display: grid;
    grid-template-columns: repeat(3, 54px);
    grid-auto-rows: 50px;
    row-gap: 6px;
    height: 162px;
}

.tile,
.split {
    height: 50px;
    background: #f4f4f6;
    border: 1px solid #d2d2d4;
}

.tile {
    width: 54px;
}

.split {
    display: flex;
}

.split button {
    width: 49px;
}

.split .drop {
    width: 24px;
    border-left: 1px solid #d2d2d4;
}

.draw .tile,
.block .tile,
.notes .tile,
.tools .tile {
    width: 52px;
}

.tools {
    display: flex;
    gap: 12px;
}

.tools div {
    display: flex;
}

.combo {
    display: flex;
    align-items: center;
    gap: 4px;
    width: 467px;
    height: 50px;
    padding: 0 7px 0 5px;
    background: linear-gradient(#fff, #f4f4f4);
    border: 1px solid #ccc;
    font-size: 26px;
}

.combo select {
    flex: 1;
    min-width: 0;
}

.combo svg + select {
    padding-left: 3px;
}

.flat {
    width: 142px;
    padding-top: 9px;
    justify-content: flex-start;
    background: linear-gradient(#f8f8f8, #ededed);
}

.flat-label {
    flex: 1;
    padding-top: 12px;
    line-height: 38px;
}

.flat > .caret {
    margin-bottom: 11px;
}

/* Область чертежа */
.canvas {
    flex: 1;
    min-height: 0;
    position: relative;
    border-left: 5px solid #999;
    border-right: 5px solid #ccc;
}

.drawing {
    position: absolute;
    inset: 0;
    width: 100%;
    height: 100%;
}

.key {
    fill: #fff;
    font-family: var(--arial);
    font-size: 46px;
}

.mdi {
    position: absolute;
    top: 20px;
    right: 22px;
    display: flex;
    gap: 18px;
}

.ucs {
    position: absolute;
    left: 0;
    bottom: 0;
}

.ucs text {
    fill: #ddd;
    font-family: 'Lato', sans-serif;
    font-weight: 300;
    font-size: 42px;
}

/* Листы */
.sheets {
    display: flex;
    height: 42px;
    padding-left: 5px;
    background: #f2f2f2;
    border-top: 2px solid #888;
    font-family: var(--arial);
    font-size: 25px;
    flex: none;
}

.sheet-nav {
    display: flex;
    height: 34px;
}

.sheet-nav button {
    width: 35px;
    background: #fafafa;
    border: 1px solid #aaa;
    border-width: 0 1px 1px 0;
}

.sheet {
    position: relative;
    height: 34px;
    padding: 3px 27px 0 14px;
    border-bottom: 1px solid #888;
}

.sheet::after {
    content: '';
    position: absolute;
    top: 0;
    right: 0;
    height: 34px;
    border-right: 2px solid #555;
    transform: skewX(-22deg);
}

.sheet.current {
    width: 147px;
    margin-top: -2px;
    height: 36px;
    padding: 5px 2px 0 0;
    color: #fff;
    background: #000;
    clip-path: polygon(0 0, 100% 0, 92% 100%, 9% 100%);
}

/* Командная строка */
.command {
    display: flex;
    height: 167px;
    border-top: 10px solid #646464;
    font-family: var(--mono);
    font-size: 31px;
    color: #e4e4e4;
    flex: none;
}

.grip {
    width: 41px;
    background: radial-gradient(circle, #444 1px, transparent 2px) 3px 4px / 5px 5px repeat-x, #a6a6a6;
    border-right: 4px solid #f4f4f4;
}

.console {
    flex: 1;
    min-width: 0;
}

.history {
    display: flex;
    height: 115px;
    border-bottom: 4px solid #777;
}

.lines {
    flex: 1;
    padding-top: 1px;
    line-height: 37px;
}

.vscroll {
    width: 40px;
    display: flex;
    flex-direction: column;
    justify-content: space-between;
    background: #f0f0f0;
}

.vscroll button {
    height: 40px;
}

.prompt {
    display: flex;
    height: 42px;
}

.prompt input {
    flex: 1;
    min-width: 0;
    padding-top: 5px;
    outline: none;
}

.hscroll {
    display: flex;
    align-items: center;
    width: 202px;
    padding-left: 2px;
    background: #f0f0f0;
}

.hscroll button {
    width: 45px;
    height: 40px;
}

.hscroll button:last-child {
    margin-left: 35px;
}

.thumb {
    width: 34px;
    height: 36px;
    background: linear-gradient(#fafafa, #d4d4d4);
    border: 1px solid #aaa;
}

/* Строка состояния */
.status {
    position: relative;
    display: flex;
    height: 58px;
    background: linear-gradient(#a4a4a4, #7c7c7c 50px, #4a4a4a 50px, #4a4a4a 53px, #a0a0a0 53px);
    font-family: var(--arial);
    font-size: 26px;
    color: #1a1a1a;
    flex: none;
}

.coords {
    width: 404px;
    padding-left: 30px;
    line-height: 54px;
    font-size: 25px;
    color: #9a9a9a;
}

.modes {
    display: flex;
    width: 517px;
    height: 50px;
    border-left: 1px solid #666;
}

.modes button {
    flex: 1;
}

.modes button,
.group > * {
    height: 50px;
    background: linear-gradient(#c6c6c6, #a8a8a8);
    border-right: 2px solid #6a6a6a;
}

.modes .on {
    background: linear-gradient(#e4f4fa, #8fc3da 50%, #c4ecf8);
}

.status-right {
    display: flex;
    height: 50px;
    margin-left: auto;
    padding-right: 4px;
}

.group {
    display: flex;
    border-left: 2px solid #6a6a6a;
}

.group:nth-child(2),
.group:nth-child(3) {
    margin-left: 25px;
}

.group:nth-child(4) {
    margin-left: 9px;
}

.group:nth-child(5) {
    margin-left: 6px;
}

.group button {
    width: 52px;
}

.group .scale {
    width: 119px;
    gap: 4px;
}

.group .narrow {
    width: 26px;
}

.workspace {
    display: flex;
    align-items: center;
    width: 404px;
    padding: 0 10px 0 7px;
}

.workspace select {
    flex: 1;
    min-width: 0;
}

.workspace .caret {
    margin-bottom: 8px;
}

/* Верх кнопки «Пуск» под строкой состояния */
.orb {
    position: absolute;
    left: 33px;
    bottom: 0;
    width: 74px;
    height: 16px;
    background: linear-gradient(#dfeaf6, #8fa6c0);
    border-radius: 50% 50% 0 0 / 100% 100% 0 0;
    box-shadow: 0 0 5px #123;
}

.side-handle {
    position: absolute;
    left: 0;
    top: 148px;
    width: 12px;
    height: 220px;
    background: linear-gradient(#f0f2f4, #dfe4e8 60%, #aab4ba 60%, #e8ecee);
    border: 2px solid #26282a;
    border-left: none;
    border-radius: 0 12px 12px 0;
    box-shadow: inset -3px 0 0 #4fc4d8, 2px 0 14px #555;
}
```
